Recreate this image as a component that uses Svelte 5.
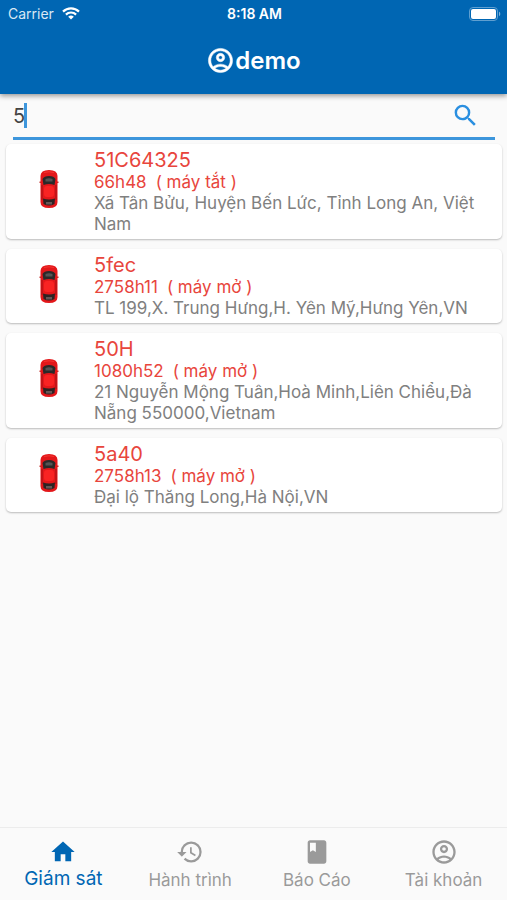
<script lang="ts">
  let query = $state('5');
  let active = $state('Giám sát');

  const vehicles = [
    { plate: '51C64325', hours: '66h48', engine: '( máy tắt )', address: 'Xã Tân Bửu, Huyện Bến Lức, Tỉnh Long An, Việt Nam' },
    { plate: '5fec', hours: '2758h11', engine: '( máy mở )', address: 'TL 199,X. Trung Hưng,H. Yên Mỹ,Hưng Yên,VN' },
    { plate: '50H', hours: '1080h52', engine: '( máy mở )', address: '21 Nguyễn Mộng Tuân,Hoà Minh,Liên Chiểu,Đà Nẵng 550000,Vietnam' },
    { plate: '5a40', hours: '2758h13', engine: '( máy mở )', address: 'Đại lộ Thăng Long,Hà Nội,VN' }
  ];

  const account =
    'M12 2C6.48 2 2 6.48 2 12s4.48 10 10 10 10-4.48 10-10S17.52 2 12 2zM7.35 18.5C8.66 17.56 10.26 17 12 17s3.34.56 4.65 1.5C15.34 19.44 13.74 20 12 20s-3.34-.56-4.65-1.5zm10.79-1.38C16.45 15.8 14.32 15 12 15s-4.45.8-6.14 2.12C4.7 15.73 4 13.95 4 12c0-4.42 3.58-8 8-8s8 3.58 8 8c0 1.95-.7 3.73-1.86 5.12zM12 6c-1.93 0-3.5 1.57-3.5 3.5S10.07 13 12 13s3.5-1.57 3.5-3.5S13.93 6 12 6zm0 5c-.83 0-1.5-.67-1.5-1.5S11.17 8 12 8s1.5.67 1.5 1.5S12.83 11 12 11z';

  const tabs = [
    { label: 'Giám sát', icon: 'M10 20v-6h4v6h5v-8h3L12 3 2 12h3v8z' },
    {
      label: 'Hành trình',
      icon: 'M13 3a9 9 0 0 0-9 9H1l3.89 3.89.07.14L9 12H6c0-3.87 3.13-7 7-7s7 3.13 7 7-3.13 7-7 7c-1.93 0-3.68-.79-4.94-2.06l-1.42 1.42A8.95 8.95 0 0 0 13 21a9 9 0 0 0 0-18zm-1 5v5l4.28 2.54.72-1.21-3.5-2.08V8H12z'
    },
    { label: 'Báo Cáo', icon: 'M18 2H6c-1.1 0-2 .9-2 2v16c0 1.1.9 2 2 2h12c1.1 0 2-.9 2-2V4c0-1.1-.9-2-2-2zM6 4h5v8l-2.5-1.5L6 12V4z' },
    { label: 'Tài khoản', icon: account }
  ];
</script>

<div class="screen">
  <header>
    <div class="status">
      <span class="carrier">
        Carrier
        <svg width="18" height="13" viewBox="0 0 18 13" aria-hidden="true">
          <g fill="none" stroke="#fff" stroke-width="2.2">
            <path d="M1 4.6a11.500 11.500 0 0 1 16 0" />
            <path d="M3.9 7.6a7.300 7.300 0 0 1 10.200 0" />
          </g>
          <path d="M9 12.600 6.200 9.800a4 4 0 0 1 5.600 0z" fill="#fff" />
        </svg>
      </span>
      <span class="clock">8:18 AM</span>
      <svg class="battery" width="32" height="14" viewBox="0 0 32 14" aria-hidden="true">
        <rect x=".5" y=".5" width="28" height="13" rx="3.5" fill="none" stroke="#5f9fd0" />
        <rect x="2" y="2" width="25" height="10" rx="2" fill="#fff" />
        <path d="M30 4.800c1.700.6 1.700 3.800 0 4.400z" fill="#7fb2da" />
      </svg>
    </div>
    <h1>
      <svg width="29" height="29" viewBox="0 0 24 24" aria-hidden="true"><path d={account} fill="currentColor" stroke="currentColor" stroke-width=".4" /></svg>demo
    </h1>
  </header>

  <main>
    <form class="search" onsubmit={(e) => e.preventDefault()}>
      <input type="text" aria-label="Tìm kiếm" bind:value={query} />
      <span class="caret"></span>
      <button type="submit" aria-label="Tìm kiếm">
        <svg width="29" height="29" viewBox="0 0 24 24" aria-hidden="true">
          <path
            fill="currentColor"
            d="M15.500 14h-.790l-.280-.270A6.470 6.470 0 0 0 16 9.500 6.500 6.500 0 1 0 9.500 16c1.610 0 3.090-.590 4.230-1.570l.270.280v.790l5 4.990L20.490 19l-4.990-5zm-6 0a4.500 4.500 0 1 1 0-9 4.500 4.500 0 0 1 0 9z"
          />
        </svg>
      </button>
    </form>

    <ul>
      {#each vehicles as v}
        <li>
          <svg class="car" width="20" height="40" viewBox="0 0 20 40" aria-hidden="true">
            <path d="M.5 12.500h19V14H.5z" fill="#c0302c" />
            <path d="M1.500 7Q1.500 1 10 1t8.500 6v26q0 6-8.500 6t-8.500-6z" fill="#e3171a" />
            <path d="M3 16v15M17 16v15" stroke="#a31316" />
            <path d="M5 3.500Q10 2 15 3.500" fill="none" stroke="#f5342f" />
            <path d="M3.500 10Q5 7 10 7t6.500 3l-1 6Q10 14 4.500 16z" fill="#2b2929" />
            <path d="M6.500 10q3.500-1.500 7 0v2.500h-7z" fill="#565454" />
            <rect x="5" y="17" width="10" height="11" rx="3" fill="#f92323" />
            <path d="M4 29.500Q10 31.500 16 29.500L15.500 35q-5.500 3-11 0z" fill="#2d2323" />
            <path d="M7 33h6v2.500H7z" fill="#665656" />
          </svg>
          <div class="info">
            <h2>{v.plate}</h2>
            <p class="state"><span>{v.hours}</span><span>{v.engine}</span></p>
            <p>{v.address}</p>
          </div>
        </li>
      {/each}
    </ul>
  </main>

  <nav>
    {#each tabs as tab}
      <button type="button" class:active={active === tab.label} onclick={() => (active = tab.label)}>
        <svg width="28" height="28" viewBox="0 0 24 24" aria-hidden="true"><path d={tab.icon} fill="currentColor" fill-rule="evenodd" /></svg>
        <span>{tab.label}</span>
      </button>
    {/each}
  </nav>
</div>

<style>
  :global(body) {
    margin: 0;
    background: #fafafa;
  }
  .screen {
    min-height: 100vh;
    display: flex;
    flex-direction: column;
    font-family: Inter, 'Liberation Sans', sans-serif;
    color: #808080;
  }
  header {
    background: #0066b3;
    color: #fff;
    box-shadow: 0 2px 5px rgba(0, 0, 0, 0.4);
    height: 94px;
  }
  .status {
    display: grid;
    grid-template-columns: 1fr auto 1fr;
    align-items: center;
    height: 27px;
    padding: 0 6px 0 8px;
    font-size: 14px;
  }
  .carrier {
    display: flex;
    align-items: center;
    gap: 8px;
    color: #d9e8f4;
  }
  .clock {
    font-weight: 600;
  }
  .battery {
    justify-self: end;
  }
  h1 {
    margin: 0;
    height: 66px;
    display: flex;
    align-items: center;
    justify-content: center;
    font-size: 24px;
    font-weight: 600;
  }
  main {
    flex: 1;
  }
  .search {
    position: relative;
    display: flex;
    align-items: center;
    height: 43px;
    margin: 0 12px 0 13px;
    border-bottom: 3px solid #3d96dc;
  }
  .search input {
    flex: 1;
    min-width: 0;
    border: 0;
    padding: 0;
    outline: 0;
    background: none;
    font: inherit;
    font-size: 20px;
    color: #444;
    caret-color: transparent;
  }
  .caret {
    position: absolute;
    left: 11px;
    top: 9px;
    width: 3px;
    height: 25px;
    background: #3d96dc;
  }
  .search button {
    display: flex;
    border: 0;
    background: none;
    padding: 0;
    margin-right: 15px;
    color: #2a8fe0;
  }
  ul {
    list-style: none;
    margin: 0;
    padding: 4px 5px 10px 6px;
    display: grid;
    gap: 10px;
  }
  li {
    display: flex;
    align-items: center;
    background: #fff;
    border-radius: 5px;
    box-shadow: 0 1px 2px rgba(0, 0, 0, 0.26);
    padding: 4px 20px 4px 33px;
  }
  .car {
    flex: none;
    margin: 0 35px 5px 0;
  }
  .info {
    min-width: 0;
  }
  h2 {
    margin: 0;
    font-size: 20px;
    line-height: 24px;
    font-weight: 400;
    color: #e8453c;
  }
  p {
    margin: 0;
    font-size: 17px;
    line-height: 21px;
  }
  .state {
    display: flex;
    gap: 9px;
    color: #e8453c;
  }
  nav {
    position: sticky;
    bottom: 0;
    display: grid;
    grid-template-columns: repeat(4, 1fr);
    height: 72px;
    border-top: 1px solid #ececec;
    background: #fafafa;
  }
  nav button {
    display: flex;
    flex-direction: column;
    align-items: center;
    border: 0;
    background: none;
    padding: 10px 0 0;
    font: inherit;
    font-size: 17px;
    line-height: 28px;
    color: #9a9a9a;
  }
  nav .active {
    font-size: 19px;
    line-height: 25px;
    color: #0066b3;
  }
</style>
